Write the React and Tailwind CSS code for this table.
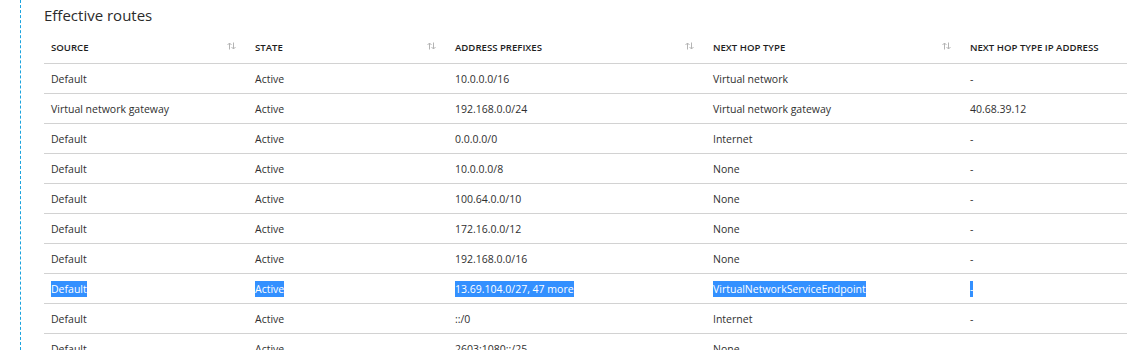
const columns = [
  { label: 'Source', sort: true },
  { label: 'State', sort: true },
  { label: 'Address prefixes', sort: true },
  { label: 'Next hop type', sort: true },
  { label: 'Next hop type IP address', sort: false },
]

const routes = [
  ['Default', 'Active', '10.0.0.0/16', 'Virtual network', '-'],
  ['Virtual network gateway', 'Active', '192.168.0.0/24', 'Virtual network gateway', '40.68.39.12'],
  ['Default', 'Active', '0.0.0.0/0', 'Internet', '-'],
  ['Default', 'Active', '10.0.0.0/8', 'None', '-'],
  ['Default', 'Active', '100.64.0.0/10', 'None', '-'],
  ['Default', 'Active', '172.16.0.0/12', 'None', '-'],
  ['Default', 'Active', '192.168.0.0/16', 'None', '-'],
  ['Default', 'Active', '13.69.104.0/27, 47 more', 'VirtualNetworkServiceEndpoint', '-', true],
  ['Default', 'Active', '::/0', 'Internet', '-'],
  ['Default', 'Active', '2603:1080::/25', 'None', '-'],
]

const gridCols = 'grid grid-cols-[204px_200px_258px_257px_1fr]'

// small up/down sort arrows
const SortIcon = () => (
  <svg width="9" height="8" viewBox="0 0 9 8" className="mr-[12px] -mt-[3px]" fill="none" stroke="#b4b4b4" strokeWidth="1">
    <path d="M2.5 7.5V1M0.5 3L2.5 1L4.5 3" />
    <path d="M6.5 0.5V7M4.5 5L6.5 7L8.5 5" />
  </svg>
)

export default function App() {
  return (
    <div className="w-[1127px] h-[350px] overflow-hidden bg-white flex font-['Segoe_UI','Open_Sans',sans-serif]">
      <div className="w-[20px] shrink-0" />
      <div className="flex-1 border-l border-dashed border-[#1aa3df] pl-[23px]">
        <h2 className="text-[15px] text-[#2b2b2b] pt-[4px] h-[32px] leading-[22px]">Effective routes</h2>

        {/* header */}
        <div className={`${gridCols} h-[32px] pt-[1px] border-b border-[#d2d2d2] items-center`}>
          {columns.map(col => (
            <div key={col.label} className="flex items-center justify-between pl-[7px]">
              <span className="uppercase text-[9.6px] font-semibold text-[#1e1e1e]">{col.label}</span>
              {col.sort && <SortIcon />}
            </div>
          ))}
        </div>

        {routes.map((row, i) => {
          const selected = row[5]
          return (
            <div key={i} className={`${gridCols} h-[30px] pt-[2px] border-b border-[#d2d2d2] items-center`}>
              {row.slice(0, 5).map((cell, j) => (
                <div key={j} className="pl-[7px] text-[10.5px] text-[#2f2f2f] leading-[13px]">
                  <span className={selected ? 'bg-[#3390ff] text-white py-[1px]' : ''}>{cell}</span>
                </div>
              ))}
            </div>
          )
        })}
      </div>
    </div>
  )
}
